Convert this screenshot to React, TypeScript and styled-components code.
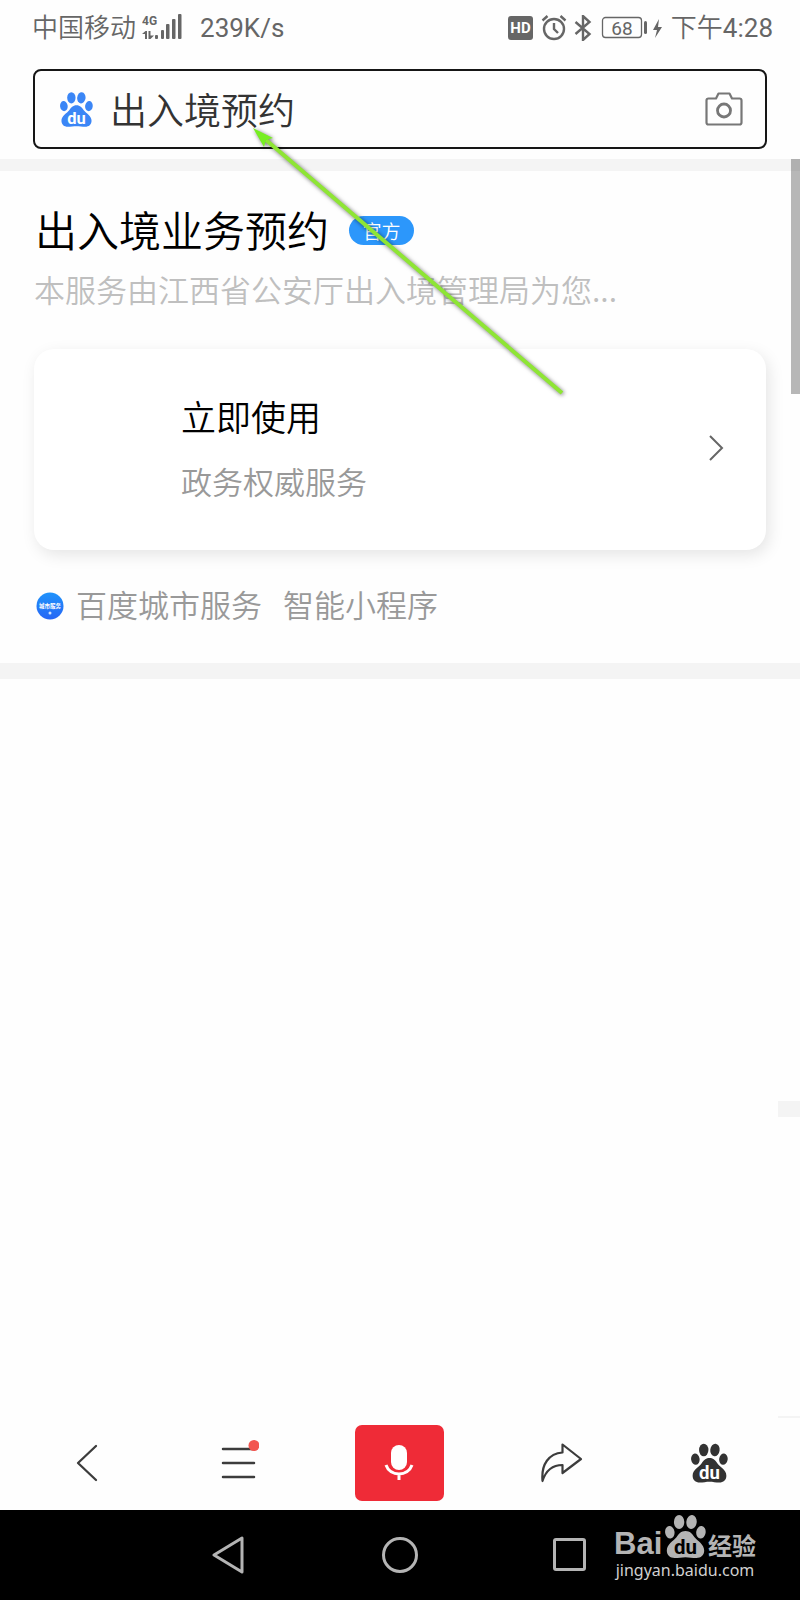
import React from "react";
import styled, { createGlobalStyle } from "styled-components";

const cjk = `"Noto Sans CJK SC"`;

const GlobalStyle = createGlobalStyle`
  * { box-sizing: border-box; }
  body { margin: 0; background: #fefefe; font-family: ${cjk}, sans-serif; font-weight: 350; }
  button { border: 0; padding: 0; background: none; font: inherit; color: inherit; cursor: pointer; }
  h1, h2, p { margin: 0; font-weight: inherit; }
  svg { display: block; flex: none; }
`;

const Screen = styled.div`
  position: relative;
  min-height: 100vh;
  display: flex;
  flex-direction: column;
  overflow: hidden;
`;

const StatusBar = styled.header`
  display: flex;
  align-items: center;
  justify-content: space-between;
  height: 56px;
  padding: 0 27px 0 32px;
  color: #666;
  font: 400 26px/36px Roboto, ${cjk}, sans-serif;
`;

const StatusGroup = styled.div<{ $gap: number }>`
  display: flex;
  align-items: center;
  gap: ${(p) => p.$gap}px;
`;

const Carrier = styled.span`
  font-weight: 350;
`;

const Speed = styled.span`
  margin-left: 12px;
`;

const SearchBox = styled.form`
  display: flex;
  align-items: center;
  gap: 17px;
  height: 80px;
  margin: 13px 33px 10px;
  padding: 0 22px 0 25px;
  border: 2px solid #161616;
  border-radius: 8px;
`;

const SearchInput = styled.input`
  flex: 1;
  min-width: 0;
  height: 56px;
  padding: 0;
  border: 0;
  outline: 0;
  background: none;
  color: #333;
  font: 350 37px/56px ${cjk}, sans-serif;
`;

const Band = styled.div<{ $h: number }>`
  height: ${(p) => p.$h}px;
  background: #f4f4f4;
`;

const Result = styled.section`
  padding: 30px 34px 37px;
`;

const TitleRow = styled.div`
  display: flex;
  align-items: center;
  gap: 20px;
  padding-left: 1px;
  color: #000;
`;

const Title = styled.h1`
  font-size: 42px;
  line-height: 56px;
  padding-bottom: 2px;
`;

const Badge = styled.span`
  width: 65px;
  border-radius: 15px;
  background: #2c97fb;
  color: #fff;
  font-size: 19px;
  line-height: 29px;
  text-align: center;
`;

const Caption = styled.p<{ $color: string }>`
  color: ${(p) => p.$color};
  font-size: 31px;
  line-height: 44px;
  white-space: nowrap;
  overflow: hidden;
  text-overflow: ellipsis;
`;

const Summary = styled(Caption)`
  margin-top: 8px;
`;

const Card = styled.button`
  display: flex;
  align-items: center;
  justify-content: space-between;
  width: 100%;
  height: 201px;
  margin: 38px 0 32px;
  padding: 0 42px 4px 147px;
  border-radius: 20px;
  background: #fff;
  box-shadow: 3px 5px 16px rgba(0, 0, 0, 0.1);
  text-align: left;
`;

const CardTitle = styled.h2`
  margin-bottom: 20px;
  color: #000;
  font-size: 35px;
  line-height: 46px;
`;

const Source = styled.div`
  display: flex;
  align-items: center;
  gap: 12px;
  padding-left: 2px;
`;

const SourceIcon = styled.svg`
  margin-top: 3px;
`;

const SourceName = styled(Caption)`
  margin-right: 9px;
`;

const Blank = styled.main`
  flex: 1;
`;

const Toolbar = styled.nav`
  display: grid;
  grid-template-columns: 174fr 130fr 190fr 136fr 158fr;
  place-items: center;
  height: 94px;
  padding-right: 12px;
`;

const ToolButton = styled.button`
  display: flex;
  align-items: center;
  justify-content: center;
  width: 60px;
  height: 60px;
`;

const CameraButton = styled(ToolButton)`
  width: 38px;
`;

const MicButton = styled(ToolButton)`
  width: 89px;
  height: 76px;
  border-radius: 7px;
  background: #ef2b37;
`;

const SystemNav = styled.nav`
  position: relative;
  display: flex;
  align-items: center;
  justify-content: center;
  gap: 134px;
  height: 90px;
  background: #000;
`;

const SystemButton = styled.button`
  width: 36px;
  height: 40px;
`;

const Watermark = styled.div`
  position: absolute;
  right: 44px;
  top: 3px;
  width: 142px;
  color: #b4b4b4;
`;

const Brand = styled.div`
  display: flex;
  align-items: flex-end;
  justify-content: space-between;
  height: 46px;
  font: 700 31px/30px "Liberation Sans", sans-serif;
`;

const BrandSuffix = styled.span`
  font: 700 24px/28px ${cjk}, sans-serif;
`;

const Url = styled.div`
  font: 400 16px/22px "Noto Sans", sans-serif;
  color: #d0d0d0;
  text-align: center;
`;

const ScrollThumb = styled.div`
  position: absolute;
  top: 159px;
  right: 0;
  width: 9px;
  height: 235px;
  background: rgba(0, 0, 0, 0.28);
`;

const EdgeMark = styled.div<{ $bottom: number; $h: number }>`
  position: absolute;
  right: 0;
  bottom: ${(p) => p.$bottom}px;
  width: 22px;
  height: ${(p) => p.$h}px;
  background: #f4f4f4;
`;

const Pointer = styled.svg`
  position: absolute;
  left: 244px;
  top: 119px;
  pointer-events: none;
  filter: drop-shadow(1px 1px 2px rgba(0, 0, 0, 0.55));
`;

type PawProps = { width: number; height: number; color: string; letter: string };

const Paw = ({ width, height, color, letter }: PawProps) => (
  <svg width={width} height={height} viewBox="0 0 34 36">
    <g fill={color}>
      <ellipse cx="4" cy="14.5" rx="3.9" ry="5.2" transform="rotate(-8 4 14.5)" />
      <ellipse cx="11.7" cy="6" rx="4.3" ry="5.8" />
      <ellipse cx="22" cy="6" rx="4.3" ry="5.8" transform="rotate(6 22 6)" />
      <ellipse cx="29.8" cy="14.5" rx="3.9" ry="5.2" transform="rotate(8 29.8 14.5)" />
      <path d="M17 13.500c3.800 0 5.500 2.400 7.500 5.200 2.300 3.100 8 5.500 8 11 0 4-2.800 6.200-6.500 6.200-3.200 0-6-.7-9-.7s-5.800.7-9 .7c-3.700 0-6.500-2.200-6.500-6.200 0-5.500 5.700-7.900 8-11 2-2.800 3.700-5.200 7.500-5.200z" />
    </g>
    <text x="17" y="32.500" textAnchor="middle" fill={letter} fontFamily="Roboto, sans-serif" fontWeight="700" fontSize="17">
      du
    </text>
  </svg>
);

const Signal = () => (
  <svg width="40" height="28" viewBox="0 0 40 28" fill="#666">
    <text x="0" y="11" fontFamily="Roboto, sans-serif" fontWeight="700" fontSize="12">4G</text>
    <path d="M0 20l3.500-3h1.500v8H3v-5zM6.500 17h2v4.500H12L8.500 25h-2z" />
    <rect x="13" y="21" width="3" height="4" rx="1" />
    <rect x="19" y="16" width="3" height="9" rx="1" />
    <rect x="24" y="10" width="3.500" height="15" rx="1" />
    <rect x="30" y="5" width="3.500" height="20" rx="1" />
    <rect x="36" y="0" width="3.500" height="25" rx="1" />
  </svg>
);

const StatusIcons = () => (
  <svg width="154" height="26" viewBox="0 0 154 26" fill="none" stroke="#666" strokeWidth="2.4">
    <rect x="0" y="1" width="25" height="24" rx="3" fill="#666" stroke="none" />
    <text x="12.500" y="18" textAnchor="middle" fill="#fff" stroke="none" fontFamily="Roboto, sans-serif" fontWeight="700" fontSize="15">HD</text>
    <circle cx="46" cy="14" r="10" />
    <path d="M46 8v6l4 4M34.500 5.500l5-4.500M57.500 5.500l-5-4.500" />
    <path d="M67.500 7l14 12-6.500 6V1l6.500 6-14 12" />
    <rect x="94.500" y="2.500" width="39" height="20" rx="3" strokeWidth="1.300" />
    <text x="114" y="19.500" textAnchor="middle" fill="#666" stroke="none" fontFamily="Roboto, sans-serif" fontSize="19">68</text>
    <rect x="136" y="6" width="3" height="13" rx="1.500" fill="#666" stroke="none" />
    <path d="M151 4l-6 11h4l-2 8 7-11h-4z" fill="#666" stroke="none" />
  </svg>
);

export default function App() {
  return (
    <Screen>
      <GlobalStyle />
      <StatusBar>
        <StatusGroup $gap={6}>
          <Carrier>中国移动</Carrier>
          <Signal />
          <Speed>239K/s</Speed>
        </StatusGroup>
        <StatusGroup $gap={9}>
          <StatusIcons />
          <span>
            <Carrier>下午</Carrier>4:28
          </span>
        </StatusGroup>
      </StatusBar>

      <SearchBox>
        <Paw width={33} height={35} color="#3b86f6" letter="#fff" />
        <SearchInput aria-label="搜索" defaultValue="出入境预约" />
        <CameraButton type="button" aria-label="拍照搜索">
          <svg width="38" height="34" viewBox="0 0 38 34" fill="none" stroke="#777" strokeWidth="2.200" strokeLinejoin="round">
            <path d="M3.500 6.500H11L13.500 1.500h11L27 6.500h7.500q2 0 2 2v22q0 2-2 2h-31q-2 0-2-2v-22q0-2 2-2z" />
            <circle cx="19" cy="18.500" r="6.500" strokeWidth="2.800" />
          </svg>
        </CameraButton>
      </SearchBox>

      <Band $h={12} />
      <Result>
        <TitleRow>
          <Title>出入境业务预约</Title>
          <Badge>官方</Badge>
        </TitleRow>
        <Summary $color="#bfbfbf">本服务由江西省公安厅出入境管理局为您...</Summary>
        <Card type="button">
          <div>
            <CardTitle>立即使用</CardTitle>
            <Caption $color="#999">政务权威服务</Caption>
          </div>
          <svg width="15" height="26" viewBox="0 0 15 26" fill="none" stroke="#666" strokeWidth="2">
            <path d="M1 1l12 12L1 25" />
          </svg>
        </Card>
        <Source>
          <SourceIcon width="28" height="28" viewBox="0 0 28 28">
            <defs>
              <linearGradient id="disc" x1="0" y1="0" x2="0" y2="1">
                <stop offset="0" stopColor="#1f93fb" />
                <stop offset="1" stopColor="#2766f5" />
              </linearGradient>
            </defs>
            <circle cx="14" cy="14" r="13.500" fill="url(#disc)" />
            <text x="14" y="16" textAnchor="middle" fill="#fff" fontSize="5.500" fontWeight="700">城市服务</text>
            <circle cx="14" cy="21" r="1.500" fill="#cfe2ff" />
          </SourceIcon>
          <SourceName $color="#999">百度城市服务</SourceName>
          <Caption $color="#999">智能小程序</Caption>
        </Source>
      </Result>
      <Band $h={16} />
      <Blank />

      <Toolbar>
        <ToolButton type="button" aria-label="返回">
          <svg width="22" height="38" viewBox="0 0 22 38" fill="none" stroke="#3c3c3c" strokeWidth="2.300" strokeLinecap="round" strokeLinejoin="round">
            <path d="M20 2L2 19l18 17" />
          </svg>
        </ToolButton>
        <ToolButton type="button" aria-label="菜单">
          <svg width="40" height="50" viewBox="0 0 40 50" fill="none" stroke="#3c3c3c" strokeWidth="2.500" strokeLinecap="round">
            <path d="M4 11h31M4 25h31M4 39h31" />
            <circle cx="35" cy="7.500" r="5.500" fill="#f25650" stroke="none" />
          </svg>
        </ToolButton>
        <MicButton type="button" aria-label="语音搜索">
          <svg width="30" height="36" viewBox="0 0 30 36" fill="none" stroke="#fff" strokeWidth="3">
            <rect x="7" y="0" width="16" height="25" rx="8" fill="#fff" stroke="none" />
            <path d="M2 20c4 12 22 12 26 0M15 28v7" />
          </svg>
        </MicButton>
        <ToolButton type="button" aria-label="分享">
          <svg width="42" height="42" viewBox="0 0 42 42" fill="none" stroke="#3c3c3c" strokeWidth="2.200" strokeLinejoin="round">
            <path d="M21.500 2.500L40 17 21.500 31v-8C11 23 5 28 1.500 39 0 22 8 11.500 21.500 10.500z" />
          </svg>
        </ToolButton>
        <ToolButton type="button" aria-label="百度首页">
          <Paw width={37} height={40} color="#333" letter="#fff" />
        </ToolButton>
      </Toolbar>

      <SystemNav>
        <SystemButton type="button" aria-label="后退">
          <svg width="36" height="40" viewBox="0 0 36 40" fill="none" stroke="#b4b4b4" strokeWidth="3" strokeLinejoin="round">
            <path d="M30 3v34L2 20z" />
          </svg>
        </SystemButton>
        <SystemButton type="button" aria-label="主屏幕">
          <svg width="36" height="40" viewBox="0 0 36 40" fill="none" stroke="#b4b4b4" strokeWidth="3">
            <circle cx="18" cy="20" r="16.500" />
          </svg>
        </SystemButton>
        <SystemButton type="button" aria-label="最近任务">
          <svg width="36" height="40" viewBox="0 0 36 40" fill="none" stroke="#b4b4b4" strokeWidth="3">
            <rect x="2.500" y="4.500" width="30" height="30" rx="1.500" />
          </svg>
        </SystemButton>
        <Watermark>
          <Brand>
            <span>Bai</span>
            <Paw width={41} height={45} color="#b4b4b4" letter="#000" />
            <BrandSuffix>经验</BrandSuffix>
          </Brand>
          <Url>jingyan.baidu.com</Url>
        </Watermark>
      </SystemNav>

      <ScrollThumb />
      <EdgeMark $bottom={483} $h={16} />
      <EdgeMark $bottom={182} $h={2} />
      <Pointer width="326" height="284" viewBox="0 0 326 284">
        <path d="M22 21L318 274" stroke="#8ee534" strokeWidth="4" fill="none" />
        <path d="M9 9l20 10-7 2-2 7z" fill="#77ee22" />
      </Pointer>
    </Screen>
  );
}
